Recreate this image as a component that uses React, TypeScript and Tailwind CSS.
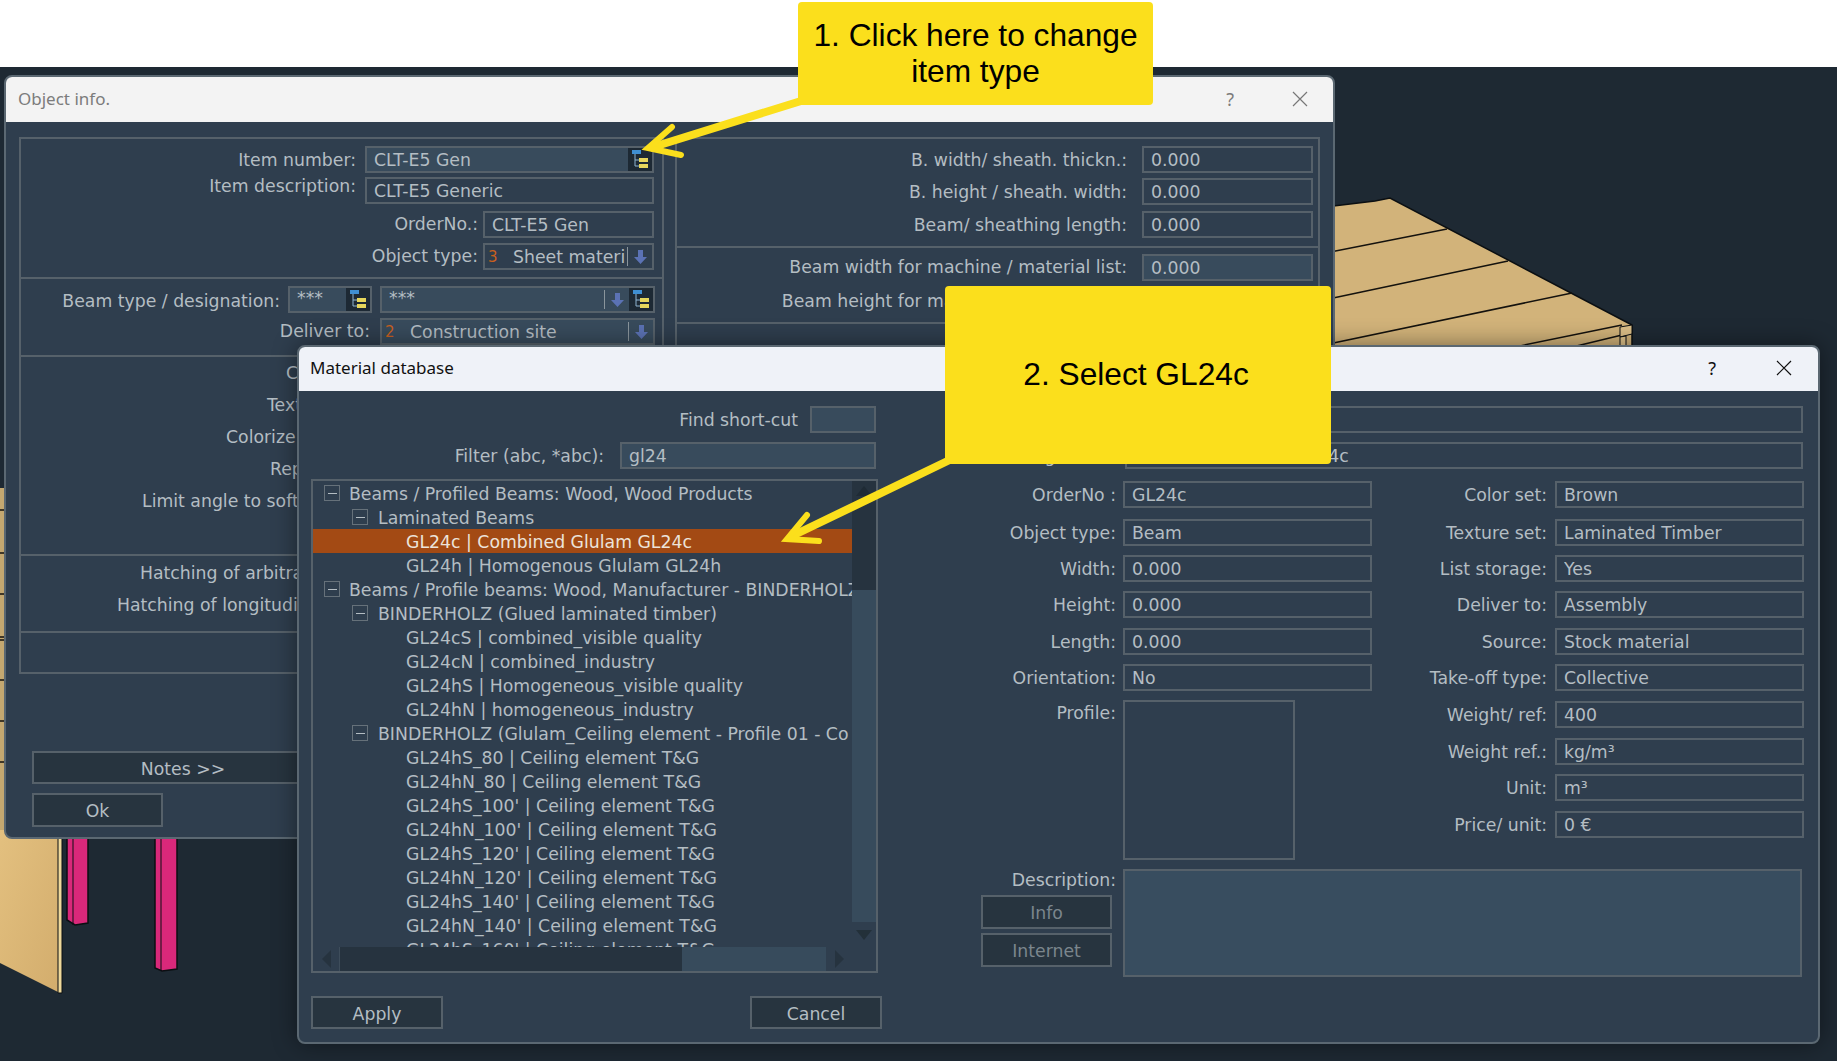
import type { ReactNode } from "react";

const uiFont = "font-['DejaVu_Sans',sans-serif] text-[17.3px] leading-[22px] text-[#b4bdc3]";

function TreeIcon() {
  return (
    <svg width="16" height="19" viewBox="0 0 16 19" fill="none">
      <path d="M3 4V16H8M3 10H8" stroke="#8fb4cf" strokeWidth="1" />
      <rect x="0" y="0" width="9" height="4" fill="#3f8fd2" />
      <rect x="7" y="8" width="9" height="4" fill="#e6d65c" />
      <rect x="7" y="14" width="9" height="4" fill="#e6d65c" />
    </svg>
  );
}

function DownArrow() {
  return (
    <svg width="13" height="14" viewBox="0 0 13 14">
      <path d="M4 0H9V7H13L6.5 14L0 7H4Z" fill="#5b72b4" />
    </svg>
  );
}

function Close({ color }: { color: string }) {
  return (
    <svg width="16" height="16" viewBox="0 0 16 16" fill="none">
      <path d="M1 1L15 15M15 1L1 15" stroke={color} strokeWidth="1.2" />
    </svg>
  );
}

function Field({
  value,
  width,
  filled,
  className = "",
  children,
}: {
  value?: string;
  width: string;
  filled?: boolean;
  className?: string;
  children?: ReactNode;
}) {
  return (
    <div
      className={`flex h-[27px] shrink-0 items-center overflow-hidden border-2 border-[#56616a] pl-[7px] whitespace-nowrap ${width} ${
        filled ? "bg-[#384b5c]" : ""
      } ${className}`}
    >
      {value && <span className="min-w-0 flex-1 overflow-hidden">{value}</span>}
      {children}
    </div>
  );
}

function TreeButton() {
  return (
    <div className="flex h-full w-[24px] shrink-0 items-center justify-center bg-[#1d2934]">
      <TreeIcon />
    </div>
  );
}

function ArrowButton() {
  return (
    <div className="flex h-full shrink-0 items-center">
      <div className="h-[19px] w-px bg-[#8a959c]" />
      <div className="flex w-[24px] justify-center">
        <DownArrow />
      </div>
    </div>
  );
}

function Select({
  number,
  value,
  width,
  filled,
}: {
  number: string;
  value: string;
  width: string;
  filled?: boolean;
}) {
  return (
    <Field width={width} filled={filled} className="!pl-[1px] !pr-0">
      <span className="w-[27px] shrink-0 pl-[2px] text-[15px] text-[#c8601e]">{number}</span>
      <span className="min-w-0 flex-1 overflow-hidden">{value}</span>
      <ArrowButton />
    </Field>
  );
}

function Label({ children, className = "" }: { children: ReactNode; className?: string }) {
  return <span className={`shrink-0 whitespace-nowrap ${className}`}>{children}</span>;
}

function Button({
  children,
  width,
  disabled,
  className = "",
}: {
  children: ReactNode;
  width: string;
  disabled?: boolean;
  className?: string;
}) {
  return (
    <div
      className={`flex items-center justify-center overflow-hidden border-2 border-[#56616a] bg-[#27343f] pt-[2px] whitespace-nowrap ${width} ${
        disabled ? "text-[#7b868d]" : ""
      } ${className}`}
    >
      {children}
    </div>
  );
}

function ObjectInfoLeft() {
  return (
    <div className="h-[537px] w-[645px] shrink-0 border-2 border-[#56616a]">
      <section className="flex h-[138px] flex-col gap-[4px] pt-[7px] pr-[8px]">
        <div className="flex items-center justify-end gap-[9px]">
          <Label>Item number:</Label>
          <Field value="CLT-E5 Gen" width="w-[289px]" filled className="!pr-0">
            <TreeButton />
          </Field>
        </div>
        <div className="flex items-center justify-end gap-[9px]">
          <Label className="-mt-[9px]">Item description:</Label>
          <Field value="CLT-E5 Generic" width="w-[289px]" />
        </div>
        <div className="mt-[3px] flex items-center justify-end gap-[5px]">
          <Label className="-mt-[2px]">OrderNo.:</Label>
          <Field value="CLT-E5 Gen" width="w-[171px]" />
        </div>
        <div className="mt-[1px] flex items-center justify-end gap-[5px]">
          <Label className="-mt-[2px]">Object type:</Label>
          <Select number="3" value="Sheet materi" width="w-[171px]" />
        </div>
      </section>
      <section className="flex h-[78px] flex-col gap-[5px] border-t-2 border-[#56616a] pt-[7px] pr-[7px]">
        <div className="flex items-center justify-end">
          <Label className="mt-[2px] mr-[8px]">Beam type / designation:</Label>
          <Field width="w-[84px]" filled className="!pr-0">
            <span className="mb-[4px] flex-1">***</span>
            <TreeButton />
          </Field>
          <Field width="w-[275px]" filled className="ml-[8px] !pr-0">
            <span className="mb-[4px] flex-1">***</span>
            <ArrowButton />
            <TreeButton />
          </Field>
        </div>
        <div className="flex items-center justify-end gap-[10px]">
          <Label className="-mt-[2px]">Deliver to:</Label>
          <Select number="2" value="Construction site" width="w-[275px]" filled />
        </div>
      </section>
      <section className="flex h-[199px] flex-col gap-[10px] border-t-2 border-[#56616a] pt-[5px]">
        <div className="h-[22px] pl-[265px]">Color set:</div>
        <div className="h-[22px] pl-[246px]">Texture set:</div>
        <div className="h-[22px] pl-[205px]">Colorize texture:</div>
        <div className="h-[22px] pl-[249px]">Representation:</div>
        <div className="h-[22px] pl-[121px] whitespace-nowrap">Limit angle to soften edges:</div>
      </section>
      <section className="flex h-[77px] flex-col gap-[10px] border-t-2 border-[#56616a] pt-[6px]">
        <div className="h-[22px] pl-[119px] whitespace-nowrap">Hatching of arbitrary cuts:</div>
        <div className="h-[22px] pl-[96px] whitespace-nowrap">Hatching of longitudinal cuts:</div>
      </section>
      <section className="h-[43px] border-t-2 border-[#56616a]" />
    </div>
  );
}

function ObjectInfoRight() {
  const rows = ["B. width/ sheath. thickn.:", "B. height / sheath. width:", "Beam/ sheathing length:"];
  return (
    <div className="h-[537px] w-[645px] shrink-0 border-2 border-[#56616a]">
      <section className="flex h-[107px] flex-col gap-[5px] pt-[7px] pr-[5px]">
        {rows.map((label, i) => (
          <div key={label} className={`flex items-center justify-end gap-[15px] ${i === 2 ? "mt-[1px]" : ""}`}>
            <Label>{label}</Label>
            <Field value="0.000" width="w-[171px]" />
          </div>
        ))}
      </section>
      <section className="flex h-[76px] flex-col gap-[5px] border-t-2 border-[#56616a] pt-[6px] pr-[5px]">
        <div className="flex items-center justify-end gap-[15px]">
          <Label className="-mt-[2px]">Beam width for machine / material list:</Label>
          <Field value="0.000" width="w-[171px]" filled />
        </div>
        <div className="flex items-center justify-end gap-[15px]">
          <Label className="mt-[2px]">Beam height for machine / material list:</Label>
          <Field value="0.000" width="w-[171px]" filled />
        </div>
      </section>
      <section className="h-[100px] border-t-2 border-[#56616a]" />
    </div>
  );
}

function ObjectInfoWindow() {
  return (
    <div className={`absolute top-[75px] left-[4px] h-[764px] w-[1331px] overflow-hidden rounded-t-[8px] rounded-b-[8px] border-2 border-[#5b6872] bg-[#2f3e4e] ${uiFont}`}>
      <div className="flex h-[45px] items-center bg-[#f3f3f3] pb-[2px] pl-[12px] font-['Noto_Sans',sans-serif] text-[17px] text-[#7c7c7c]">
        <span className="flex-1">Object info.</span>
        <span className="mr-[58px] text-[18px]">?</span>
        <span className="mr-[25px]">
          <Close color="#777777" />
        </span>
      </div>
      <div className="flex gap-[11px] pt-[15px] pl-[13px]">
        <ObjectInfoLeft />
        <ObjectInfoRight />
      </div>
      <div className="mt-[77px] pl-[26px]">
        <Button width="w-[500px]" className="h-[33px]">
          <span className="pr-[198px]">Notes &gt;&gt;</span>
        </Button>
        <Button width="w-[131px]" className="mt-[9px] h-[34px]">
          Ok
        </Button>
      </div>
    </div>
  );
}

const treeRows = [
  { level: 1, text: "Beams / Profiled Beams: Wood, Wood Products" },
  { level: 2, text: "Laminated Beams" },
  { level: 3, text: "GL24c | Combined Glulam GL24c", selected: true },
  { level: 3, text: "GL24h | Homogenous Glulam GL24h" },
  { level: 1, text: "Beams / Profile beams: Wood, Manufacturer - BINDERHOLZ" },
  { level: 2, text: "BINDERHOLZ (Glued laminated timber)" },
  { level: 3, text: "GL24cS | combined_visible quality" },
  { level: 3, text: "GL24cN | combined_industry" },
  { level: 3, text: "GL24hS | Homogeneous_visible quality" },
  { level: 3, text: "GL24hN | homogeneous_industry" },
  { level: 2, text: "BINDERHOLZ (Glulam_Ceiling element - Profile 01 - Co" },
  { level: 3, text: "GL24hS_80 | Ceiling element T&G" },
  { level: 3, text: "GL24hN_80 | Ceiling element T&G" },
  { level: 3, text: "GL24hS_100' | Ceiling element T&G" },
  { level: 3, text: "GL24hN_100' | Ceiling element T&G" },
  { level: 3, text: "GL24hS_120' | Ceiling element T&G" },
  { level: 3, text: "GL24hN_120' | Ceiling element T&G" },
  { level: 3, text: "GL24hS_140' | Ceiling element T&G" },
  { level: 3, text: "GL24hN_140' | Ceiling element T&G" },
  { level: 3, text: "GL24hS_160' | Ceiling element T&G" },
];

function Collapse() {
  return (
    <span className="flex h-[16px] w-[16px] shrink-0 items-center justify-center border border-[#66717a]">
      <span className="h-px w-[9px] bg-[#b4bdc3]" />
    </span>
  );
}

function TreeRow({ level, text, selected }: { level: number; text: string; selected?: boolean }) {
  const indent = level === 1 ? "pl-[11px] gap-[9px]" : level === 2 ? "pl-[39px] gap-[10px]" : "pl-[93px]";
  return (
    <div
      className={`flex h-[24px] items-center overflow-hidden whitespace-nowrap ${indent} ${
        selected ? "bg-[#a34a14] text-[#ece3da]" : ""
      }`}
    >
      {level < 3 && <Collapse />}
      <span className="pt-[2px]">{text}</span>
    </div>
  );
}

function MaterialTree() {
  return (
    <div className="flex h-[494px] w-[567px] flex-col border-2 border-[#56616a]">
      <div className="flex h-[466px]">
        <div className="w-[539px] overflow-hidden">
          {treeRows.map((row) => (
            <TreeRow key={row.text} {...row} />
          ))}
        </div>
        <div className="flex w-[24px] flex-col">
          <div className="flex h-[109px] justify-center bg-[#26333f] pt-[5px]">
            <svg width="16" height="10" viewBox="0 0 16 10">
              <path d="M8 0L16 10H0Z" fill="#1f2b35" />
            </svg>
          </div>
          <div className="h-[332px] bg-[#374b5c]" />
          <div className="flex flex-1 justify-center pt-[8px]">
            <svg width="16" height="10" viewBox="0 0 16 10">
              <path d="M0 0H16L8 10Z" fill="#233039" />
            </svg>
          </div>
        </div>
      </div>
      <div className="flex flex-1">
        <div className="flex w-[27px] items-center justify-center border-r border-[#3e4d5b]">
          <svg width="9" height="18" viewBox="0 0 9 18">
            <path d="M9 0V18L0 9Z" fill="#26333f" />
          </svg>
        </div>
        <div className="w-[342px] bg-[#26333f]" />
        <div className="w-[144px] bg-[#374b5c]" />
        <div className="flex w-[26px] items-center justify-center">
          <svg width="9" height="18" viewBox="0 0 9 18">
            <path d="M0 0V18L9 9Z" fill="#26333f" />
          </svg>
        </div>
      </div>
    </div>
  );
}

const col1 = [
  { label: "OrderNo :", value: "GL24c", gap: "" },
  { label: "Object type:", value: "Beam", gap: "mt-[11px]" },
  { label: "Width:", value: "0.000", gap: "mt-[9px]" },
  { label: "Height:", value: "0.000", gap: "mt-[9px]" },
  { label: "Length:", value: "0.000", gap: "mt-[10px]" },
  { label: "Orientation:", value: "No", gap: "mt-[9px]" },
];

const col2 = [
  { label: "Color set:", value: "Brown", gap: "" },
  { label: "Texture set:", value: "Laminated Timber", gap: "mt-[11px]" },
  { label: "List storage:", value: "Yes", gap: "mt-[9px]" },
  { label: "Deliver to:", value: "Assembly", gap: "mt-[9px]" },
  { label: "Source:", value: "Stock material", gap: "mt-[10px]" },
  { label: "Take-off type:", value: "Collective", gap: "mt-[9px]" },
  { label: "Weight/ ref:", value: "400", gap: "mt-[10px]" },
  { label: "Weight ref.:", value: "kg/m³", gap: "mt-[10px]" },
  { label: "Unit:", value: "m³", gap: "mt-[9px]" },
  { label: "Price/ unit:", value: "0 €", gap: "mt-[10px]" },
];

function MaterialDetails() {
  return (
    <div className="ml-[6px] w-[928px] pt-[15px]">
      <div className="flex items-center justify-end gap-[9px] pr-[13px]">
        <Label>Item number:</Label>
        <Field width="w-[678px]" />
      </div>
      <div className="mt-[9px] flex items-center justify-end gap-[9px] pr-[13px]">
        <Label>Designation:</Label>
        <Field value="Combined Glulam GL24c" width="w-[678px]" />
      </div>
      <div className="mt-[12px] flex">
        <div className="h-[379px] w-[484px]">
          {col1.map((row) => (
            <div key={row.label} className={`flex justify-end ${row.gap}`}>
              <div className="flex items-center gap-[7px]">
                <Label>{row.label}</Label>
                <Field value={row.value} width="w-[249px]" />
              </div>
            </div>
          ))}
          <div className="mt-[9px] flex justify-end gap-[7px]">
            <Label className="mt-[2px]">Profile:</Label>
            <div className="mr-[77px] h-[160px] w-[172px] border-2 border-[#56616a]" />
          </div>
        </div>
        <div className="flex-1 pr-[12px]">
          {col2.map((row) => (
            <div key={row.label} className={`flex items-center justify-end gap-[8px] ${row.gap}`}>
              <Label>{row.label}</Label>
              <Field value={row.value} width="w-[249px]" />
            </div>
          ))}
        </div>
      </div>
      <div className="mt-[9px] flex justify-end gap-[7px] pr-[14px]">
        <div className="flex w-[135px] flex-col items-start">
          <Label className="h-[26px] w-full text-right">Description:</Label>
          <Button width="w-[131px]" disabled className="h-[34px]">
            Info
          </Button>
          <Button width="w-[131px]" disabled className="mt-[4px] h-[34px]">
            Internet
          </Button>
        </div>
        <div className="h-[108px] w-[679px] border-2 border-[#56616a] bg-[#384d5f]" />
      </div>
    </div>
  );
}

function MaterialWindow() {
  return (
    <div className={`absolute top-[345px] left-[297px] h-[699px] w-[1523px] overflow-hidden rounded-[8px] border-2 border-[#5b6872] bg-[#2f3e4e] shadow-[0_0_24px_rgba(0,0,0,0.45)] ${uiFont}`}>
      <div className="flex h-[44px] items-center bg-[#eff2f8] pb-[2px] pl-[11px] font-['Noto_Sans',sans-serif] text-[17px] text-[#111111]">
        <span className="flex-1">Material database</span>
        <span className="mr-[60px] text-[18px]">?</span>
        <span className="mr-[26px]">
          <Close color="#111111" />
        </span>
      </div>
      <div className="flex">
        <div className="ml-[12px] w-[571px] pt-[15px]">
          <div className="flex items-center justify-end gap-[12px] pr-[6px]">
            <Label>Find short-cut</Label>
            <Field width="w-[66px]" filled />
          </div>
          <div className="mt-[9px] flex items-center justify-end gap-[16px] pr-[6px]">
            <Label>Filter (abc, *abc):</Label>
            <Field value="gl24" width="w-[256px]" filled />
          </div>
          <div className="mt-[10px]">
            <MaterialTree />
          </div>
          <div className="mt-[23px] flex justify-between">
            <Button width="w-[132px]" className="h-[33px]">
              Apply
            </Button>
            <Button width="w-[132px]" className="h-[33px]">
              Cancel
            </Button>
          </div>
        </div>
        <MaterialDetails />
      </div>
    </div>
  );
}

// model behind the dialogs: roof boards top right, wall and posts bottom left
function Backdrop() {
  return (
    <svg className="absolute top-0 left-0" width="1837" height="1061" viewBox="0 0 1837 1061">
      <defs>
        <linearGradient id="wall" x1="0" y1="0" x2="1" y2="1">
          <stop offset="0" stopColor="#e3c07f" />
          <stop offset="1" stopColor="#d3ad6d" />
        </linearGradient>
      </defs>
      <path d="M1300 210L1375 201L1390 198L1632 325V350H1300Z" fill="#d2b37a" stroke="#0b0f12" strokeWidth="1.5" />
      <path
        d="M1300 258L1447 229M1300 305L1508 261M1300 350L1572 293M1500 350L1622 325M1560 350L1622 335"
        stroke="#14120e"
        strokeWidth="1.5"
      />
      <path d="M1620 327L1632 325V334L1620 337Z" fill="#dcbf88" stroke="#0b0f12" />
      <path d="M1620 337V350H1626V336Z" fill="#e0c48c" stroke="#0b0f12" />
      <rect x="0" y="488" width="6" height="350" fill="#c4a870" />
      <path
        d="M0 510H6M0 553H6M0 594H6M0 637H6M0 640H6M0 680H6M0 721H6M0 762H6"
        stroke="#14120e"
        strokeWidth="1.5"
      />
      <path d="M0 830H58V992L0 963Z" fill="url(#wall)" />
      <path d="M58 830H62V993H58Z" fill="#efd99b" stroke="#0b0f12" />
      <path d="M67 830H88V923L75 925L67 920Z" fill="#d9287a" stroke="#0b0f12" strokeWidth="1.5" />
      <path d="M73 830V925" stroke="#0b0f12" />
      <path d="M155 830H177V969L162 971L155 968Z" fill="#d9287a" stroke="#0b0f12" strokeWidth="1.5" />
      <path d="M161 830V971" stroke="#0b0f12" />
    </svg>
  );
}

function Callouts() {
  return (
    <>
      <svg className="absolute top-0 left-0" width="1837" height="1061" viewBox="0 0 1837 1061" fill="none">
        <path d="M650 148L830 92M960 455L790 537" stroke="#fbdf1c" strokeWidth="8" />
        <path
          d="M672 127L648 148L681 155M807 515L787 539L819 541"
          stroke="#fbdf1c"
          strokeWidth="6"
          strokeLinecap="round"
          strokeLinejoin="miter"
        />
      </svg>
      <div className="absolute top-[2px] left-[798px] flex h-[103px] w-[355px] items-center justify-center rounded-[4px] bg-[#fbdf1c] pb-[2px] text-center font-['Liberation_Sans',sans-serif] text-[31.7px] leading-[36px] text-black">
        <p>
          1. Click here to change
          <br />
          item type
        </p>
      </div>
      <div className="absolute top-[286px] left-[945px] flex h-[178px] w-[386px] items-center justify-center rounded-[4px] bg-[#fbdf1c] pr-[4px] font-['Liberation_Sans',sans-serif] text-[31.7px] text-black">
        2. Select GL24c
      </div>
    </>
  );
}

export default function App() {
  return (
    <div className="relative h-[1061px] w-[1837px] overflow-hidden bg-[#1e2933]">
      <div className="h-[67px] bg-white" />
      <Backdrop />
      <ObjectInfoWindow />
      <MaterialWindow />
      <Callouts />
    </div>
  );
}
